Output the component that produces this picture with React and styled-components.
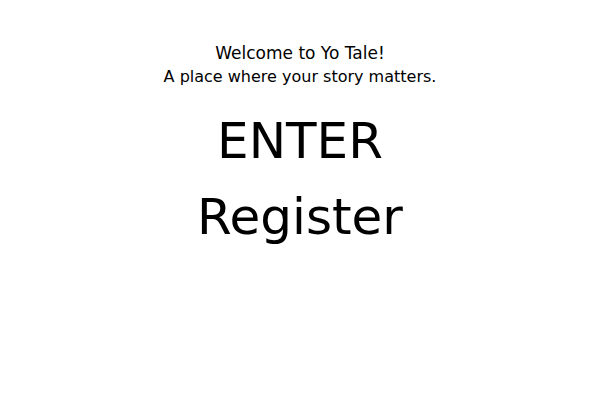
import React from "react";
import styled, { createGlobalStyle } from "styled-components";

const GlobalStyle = createGlobalStyle`
  html, body {
    margin: 0;
    padding: 0;
    background: #ffffff;
    font-family: "DejaVu Sans", sans-serif;
    color: #000000;
  }
`;

const Page = styled.main`
  display: flex;
  flex-direction: column;
  align-items: center;
  padding-top: 41px;
`;

const Greeting = styled.p`
  margin: 0;
  font-size: ${(p) => (p.$lead ? "17px" : "16px")};
  line-height: 24px;
  text-align: center;
`;

const Links = styled.nav`
  display: flex;
  flex-direction: column;
  align-items: center;
  margin-top: 14px;
`;

const BigLink = styled.a`
  font-size: 50px;
  line-height: 76px;
  color: #000000;
  text-decoration: none;
  cursor: pointer;
`;

const App = () => {
  return (
    <Page>
      <GlobalStyle />
      <Greeting $lead>Welcome to Yo Tale!</Greeting>
      <Greeting>A place where your story matters.</Greeting>
      <Links>
        <BigLink>ENTER</BigLink>
        <BigLink>Register</BigLink>
      </Links>
    </Page>
  );
};

export default App;
